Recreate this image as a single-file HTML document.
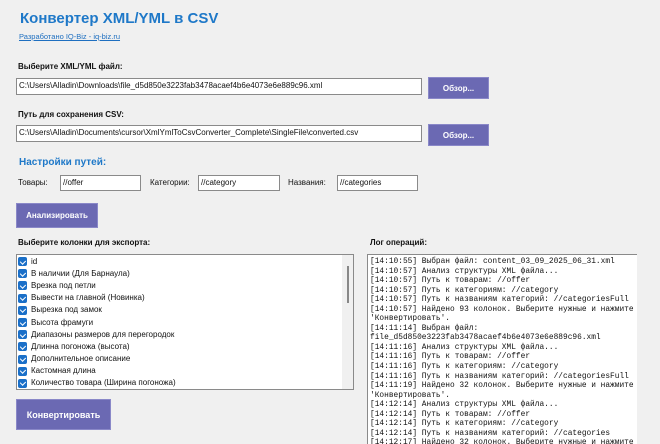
<!DOCTYPE html>
<html><head><meta charset="utf-8"><style>
*{margin:0;padding:0;box-sizing:border-box}
body{width:660px;height:440px;background:#f0f0f0;font-family:"Liberation Sans","DejaVu Sans",sans-serif;position:relative;overflow:hidden;color:#111}
.a{position:absolute;white-space:nowrap}
.lbl{font-size:8px;font-weight:bold}
.inp{position:absolute;background:#fff;border:1px solid #8a8a8a;font-size:8px;line-height:14px;padding-left:2px;overflow:hidden;white-space:nowrap}
.btn{position:absolute;background:#6b69b3;color:#fff;font-size:8px;font-weight:bold;display:flex;align-items:center;justify-content:center;border:1px solid #8a88c8}
.row{position:absolute;left:18px;font-size:8px;height:12px;line-height:12px;display:flex;align-items:center}
.cb{width:9px;height:9px;background:#1a6fc8;border-radius:2px;margin-right:4px;position:relative}
.cb:after{content:"";position:absolute;left:2.5px;top:1.5px;width:2.5px;height:4px;border:solid #fff;border-width:0 1px 1px 0;transform:rotate(45deg)}
.log{position:absolute;left:367px;top:254px;width:270px;height:190px;background:#fff;border:1px solid #8a8a8a;border-right:none;border-bottom:none;font-family:"Liberation Mono","DejaVu Sans Mono",monospace;font-size:7.85px;line-height:9.55px;padding:2px 0 0 2px;white-space:pre;overflow:hidden;color:#111}
</style></head><body>
<div class="a" style="left:20px;top:10px;font-size:15px;font-weight:bold;color:#1e78c8">Конвертер XML/YML в CSV</div>
<div class="a" style="left:19px;top:32px;font-size:7.5px;color:#1e6fc0;text-decoration:underline">Разработано IQ-Biz - iq-biz.ru</div>

<div class="a lbl" style="left:18px;top:62px">Выберите XML/YML файл:</div>
<div class="inp" style="left:16px;top:78px;width:406px;height:17px">C:\Users\Alladin\Downloads\file_d5d850e3223fab3478acaef4b6e4073e6e889c96.xml</div>
<div class="btn" style="left:428px;top:77px;width:61px;height:22px">Обзор...</div>

<div class="a lbl" style="left:18px;top:110px">Путь для сохранения CSV:</div>
<div class="inp" style="left:16px;top:125px;width:406px;height:17px">C:\Users\Alladin\Documents\cursor\XmlYmlToCsvConverter_Complete\SingleFile\converted.csv</div>
<div class="btn" style="left:428px;top:124px;width:61px;height:22px">Обзор...</div>

<div class="a" style="left:19px;top:157px;font-size:10px;font-weight:bold;color:#1e78c8">Настройки путей:</div>
<div class="a" style="left:18px;top:178px;font-size:8px">Товары:</div>
<div class="inp" style="left:60px;top:175px;width:81px;height:16px">//offer</div>
<div class="a" style="left:150px;top:178px;font-size:8px">Категории:</div>
<div class="inp" style="left:198px;top:175px;width:82px;height:16px">//category</div>
<div class="a" style="left:288px;top:178px;font-size:8px">Названия:</div>
<div class="inp" style="left:337px;top:175px;width:81px;height:16px">//categories</div>

<div class="btn" style="left:16px;top:203px;width:82px;height:25px">Анализировать</div>

<div class="a lbl" style="left:18px;top:238px">Выберите колонки для экспорта:</div>
<div class="a lbl" style="left:370px;top:238px">Лог операций:</div>

<div style="position:absolute;left:16px;top:254px;width:338px;height:136px;background:#fff;border:1px solid #8a8a8a"></div>
<div style="position:absolute;left:342px;top:255px;width:11px;height:134px;background:#f0f0f0"></div>
<div style="position:absolute;left:347px;top:266px;width:2px;height:37px;background:#888"></div>
<div class="row" style="top:255.5px"><span class="cb"></span>id</div>
<div class="row" style="top:267.5px"><span class="cb"></span>В наличии (Для Барнаула)</div>
<div class="row" style="top:279.5px"><span class="cb"></span>Врезка под петли</div>
<div class="row" style="top:292px"><span class="cb"></span>Вывести на главной (Новинка)</div>
<div class="row" style="top:304px"><span class="cb"></span>Вырезка под замок</div>
<div class="row" style="top:316.5px"><span class="cb"></span>Высота фрамуги</div>
<div class="row" style="top:328.5px"><span class="cb"></span>Диапазоны размеров для перегородок</div>
<div class="row" style="top:340.5px"><span class="cb"></span>Длинна погоножа (высота)</div>
<div class="row" style="top:353px"><span class="cb"></span>Дополнительное описание</div>
<div class="row" style="top:365px"><span class="cb"></span>Кастомная длина</div>
<div class="row" style="top:377px"><span class="cb"></span>Количество товара (Ширина погоножа)</div>

<div class="btn" style="left:16px;top:399px;width:95px;height:31px;font-size:9px">Конвертировать</div>

<div class="log">[14:10:55] Выбран файл: content_03_09_2025_06_31.xml
[14:10:57] Анализ структуры XML файла...
[14:10:57] Путь к товарам: //offer
[14:10:57] Путь к категориям: //category
[14:10:57] Путь к названиям категорий: //categoriesFull
[14:10:57] Найдено 93 колонок. Выберите нужные и нажмите
'Конвертировать'.
[14:11:14] Выбран файл:
file_d5d850e3223fab3478acaef4b6e4073e6e889c96.xml
[14:11:16] Анализ структуры XML файла...
[14:11:16] Путь к товарам: //offer
[14:11:16] Путь к категориям: //category
[14:11:16] Путь к названиям категорий: //categoriesFull
[14:11:19] Найдено 32 колонок. Выберите нужные и нажмите
'Конвертировать'.
[14:12:14] Анализ структуры XML файла...
[14:12:14] Путь к товарам: //offer
[14:12:14] Путь к категориям: //category
[14:12:14] Путь к названиям категорий: //categories
[14:12:17] Найдено 32 колонок. Выберите нужные и нажмите</div>
</body></html>
